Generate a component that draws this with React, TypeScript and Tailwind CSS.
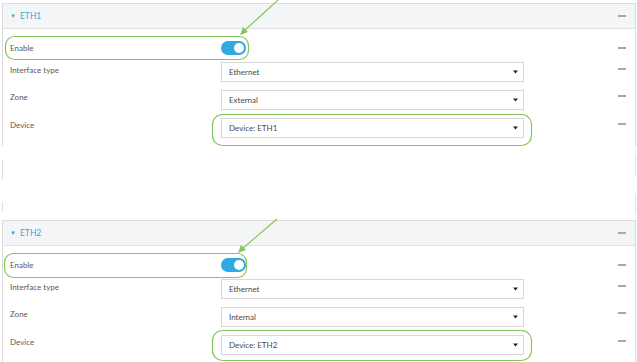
import React from "react";

type Field = { label: string; value: string };

function Minus() {
  return <span className="block w-[8px] h-[2px] bg-[#a8a8a8]" />;
}

function Caret() {
  return (
    <svg width="5" height="4" viewBox="0 0 5 4" className="block">
      <path d="M0 0.5 L5 0.5 L2.5 3.5 Z" fill="#222" />
    </svg>
  );
}

function Toggle() {
  return (
    <div className="relative w-[25px] h-[14px] rounded-full bg-[#2ea9e1]">
      <span className="absolute right-[2px] top-[2px] w-[10px] h-[10px] rounded-full bg-white" />
    </div>
  );
}

function Select({ value }: { value: string }) {
  return (
    <div className="w-[303px] h-[20px] border border-[#d8d8d8] bg-white flex items-center justify-between pl-[7px] pr-[5px] text-[#4a4a4a]">
      <span>{value}</span>
      <Caret />
    </div>
  );
}

function Panel({ title, fields }: { title: string; fields: Field[] }) {
  return (
    <div className="w-[634px] ml-[2px] border-l border-r border-t border-[#dcdcdc]">
      <div className="h-[25px] bg-[#f4f5f7] border-b border-[#e2e2e2] flex items-center justify-between pl-[7px] pr-[9px]">
        <div className="flex items-center gap-[4px] text-[#3aa6de] text-[8.5px]">
          <span className="text-[6px]">▼</span>
          <span>{title}</span>
        </div>
        <Minus />
      </div>
      <div className="pb-[8px]">
        <div className="mt-[8px] h-[22px] flex items-center pl-[7px] pr-[9px]">
          <span className="w-[211px]">Enable</span>
          <Toggle />
          <span className="flex-1" />
          <Minus />
        </div>
        {fields.map((f, i) => (
          <div
            key={f.label}
            className={
              "flex items-start pl-[7px] pr-[9px] " + (i === 0 ? "mt-[3px]" : "mt-[8px]")
            }
          >
            <span className={"w-[211px] " + (i === 0 ? "pt-[3px]" : "pt-[2px]")}>{f.label}</span>
            <Select value={f.value} />
            <span className="flex-1" />
            <span className={i === 0 ? "pt-[6px]" : "pt-[5px]"}>
              <Minus />
            </span>
          </div>
        ))}
      </div>
    </div>
  );
}

export default function App() {
  return (
    <div
      className="relative w-[637px] h-[362px] bg-white overflow-hidden text-[8px] leading-[10px] text-[#595959]"
      style={{ fontFamily: "Lato, 'Open Sans', sans-serif" }}
    >
      <div className="pt-[3px]">
        <Panel
          title="ETH1"
          fields={[
            { label: "Interface type", value: "Ethernet" },
            { label: "Zone", value: "External" },
            { label: "Device", value: "Device: ETH1" },
          ]}
        />
        {/* stitched screenshot remnants */}
        <div className="flex justify-between">
          <div className="ml-[2px] flex flex-col">
            <div className="mt-[14px] w-px h-[20px] bg-[#dcdcdc]" />
            <div className="mt-[22px] w-px h-[10px] bg-[#dcdcdc]" />
          </div>
          <div className="mr-[1px] flex flex-col">
            <div className="mt-[8px] w-px h-[22px] bg-[#e6e6e6]" />
            <div className="mt-[18px] w-px h-[20px] bg-[#e6e6e6]" />
          </div>
        </div>
        <div className="mt-[6px]">
          <Panel
            title="ETH2"
            fields={[
              { label: "Interface type", value: "Ethernet" },
              { label: "Zone", value: "Internal" },
              { label: "Device", value: "Device: ETH2" },
            ]}
          />
        </div>
      </div>

      {/* annotations */}
      <svg className="absolute inset-0 pointer-events-none" width="637" height="362" viewBox="0 0 637 362">
        <g fill="none" stroke="#86c55a" strokeWidth="1.2">
          <rect x="5.5" y="36.5" width="243" height="23" rx="9" />
          <rect x="212.5" y="114.5" width="319" height="31" rx="10" />
          <rect x="4.5" y="253.5" width="242" height="24" rx="9" />
          <rect x="212.5" y="330.5" width="319" height="30" rx="10" />
          <line x1="278" y1="0" x2="244" y2="31" />
          <line x1="277" y1="219" x2="242" y2="249" />
        </g>
        <g fill="#86c55a">
          <path d="M240 35 L243 27 L248 32 Z" />
          <path d="M238 253 L241 245 L246 250 Z" />
        </g>
      </svg>
    </div>
  );
}
